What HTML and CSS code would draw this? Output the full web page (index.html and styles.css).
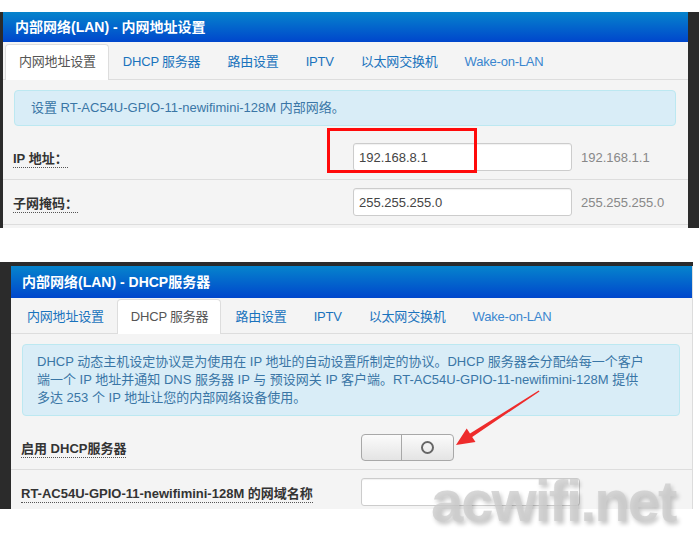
FILE: index.html
```html
<!DOCTYPE html>
<html lang="zh-CN">
<head>
  <meta charset="UTF-8" />
  <title>LAN</title>
  <link rel="stylesheet" href="styles.css">
</head>
<body>
  <div class="shot shot-lan">
    <div class="panel">
      <div class="panel-head">内部网络(LAN) - 内网地址设置</div>
      <ul class="tabs">
        <li class="active">内网地址设置</li>
        <li>DHCP 服务器</li>
        <li>路由设置</li>
        <li>IPTV</li>
        <li>以太网交换机</li>
        <li>Wake-on-LAN</li>
      </ul>
      <div class="panel-body">
        <div class="alert">设置 RT-AC54U-GPIO-11-newifimini-128M 内部网络。</div>
      </div>
      <table class="form-table">
        <tr>
          <th><span class="lbl">IP 地址：</span></th>
          <td><input class="field" type="text" value="192.168.8.1"><span class="hint">192.168.1.1</span></td>
        </tr>
        <tr>
          <th><span class="lbl">子网掩码：</span></th>
          <td><input class="field" type="text" value="255.255.255.0"><span class="hint">255.255.255.0</span></td>
        </tr>
        <tr>
          <th></th>
          <td></td>
        </tr>
      </table>
    </div>
  </div>

  <div class="shot shot-dhcp">
    <div class="panel">
      <div class="panel-head">内部网络(LAN) - DHCP服务器</div>
      <ul class="tabs">
        <li>内网地址设置</li>
        <li class="active">DHCP 服务器</li>
        <li>路由设置</li>
        <li>IPTV</li>
        <li>以太网交换机</li>
        <li>Wake-on-LAN</li>
      </ul>
      <div class="panel-body">
        <div class="alert">DHCP 动态主机设定协议是为使用在 IP 地址的自动设置所制定的协议。DHCP 服务器会分配给每一个客户<br>端一个 IP 地址并通知 DNS 服务器 IP 与 预设网关 IP 客户端。RT-AC54U-GPIO-11-newifimini-128M 提供<br>多达 253 个 IP 地址让您的内部网络设备使用。</div>
      </div>
      <table class="form-table">
        <tr>
          <th><span class="lbl">启用 DHCP服务器</span></th>
          <td>
            <div class="switch"><span class="sw-on"></span><span class="sw-off"><i class="ring"></i></span></div>
          </td>
        </tr>
        <tr>
          <th><span class="lbl">RT-AC54U-GPIO-11-newifimini-128M 的网域名称</span></th>
          <td><input class="field" type="text" value=""></td>
        </tr>
      </table>
    </div>
  </div>

  <div class="mark-box"></div>
  <svg class="mark-arrow" width="699" height="543" viewBox="0 0 699 543">
    <polygon points="538.7,390.4 470,433.5 466.7,428.5 456,445 475.5,441.9 472.2,436.9 539.5,391.4" fill="#ee2b2b"/>
  </svg>
  <div class="watermark">acwifi.net</div>
</body>
</html>
```

FILE: styles.css
```css
body {
  margin: 0;
  padding: 0;
  width: 699px;
  height: 543px;
  overflow: hidden;
  position: relative;
  background-color: #fff;
  font-family: "Liberation Sans", "Noto Sans CJK SC", sans-serif;
  font-size: 13px;
  color: #333;
}

.shot {
  background-color: #2b2b2b;
  box-sizing: border-box;
  overflow: hidden;
}

.shot-lan {
  margin-top: 12px;
  height: 216px;
  padding: 0 11px 0 3px;
}

.shot-dhcp {
  margin-top: 34px;
  width: 693px;
  height: 247px;
  padding: 4px 0 0 11px;
}

.panel {
  background-color: #f4f4f4;
  height: 100%;
  overflow: hidden;
}

.shot-dhcp .panel {
  border-right: 1px solid #dcdcdc;
}

.panel-head {
  height: 30px;
  line-height: 30px;
  padding-left: 12px;
  background: linear-gradient(#0684cc, #0046cc);
  color: #fff;
  font-weight: bold;
  font-size: 14px;
}

.shot-dhcp .panel-head {
  height: 32px;
  line-height: 32px;
  padding-left: 11px;
}

.tabs {
  list-style: none;
  margin: 0;
  padding: 2px 0 0 2px;
  display: flex;
  height: 35px;
  border-bottom: 1px solid #dddddd;
}

.shot-dhcp .tabs {
  height: 34px;
  padding-top: 1px;
}

.tabs li {
  padding: 0 12px 0 13px;
  line-height: 33px;
  color: #1a73bd;
  border: 1px solid transparent;
  border-bottom: none;
  border-radius: 4px 4px 0 0;
  letter-spacing: -0.2px;
}

.tabs li:last-child {
  color: #3a86cf;
}

.tabs li.active {
  background-color: #fff;
  border-color: #dddddd;
  color: #555;
  height: 35px;
}

.shot-dhcp .tabs li.active {
  height: 34px;
}

.panel-body {
  padding: 10px 12px 9px 11px;
}

.alert {
  background-color: #d9edf7;
  border: 1px solid #bce8f1;
  border-radius: 4px;
  padding: 8px 14px 8px 16px;
  line-height: 18px;
  color: #3a76a6;
}

.shot-dhcp .alert {
  padding-left: 14px;
}

.form-table {
  width: 100%;
  border-collapse: collapse;
}

.form-table tr {
  border-bottom: 1px solid #dddddd;
}

.form-table th {
  width: 340px;
  padding: 8px 0 8px 10px;
  text-align: left;
  font-weight: bold;
  height: 28px;
}

.form-table td {
  padding: 8px 0;
  height: 28px;
  white-space: nowrap;
}

.lbl {
  border-bottom: 1px dotted #555;
  padding-bottom: 1px;
  color: #333;
}

.field {
  width: 219px;
  height: 28px;
  box-sizing: border-box;
  padding: 0 5px;
  border: 1px solid #cccccc;
  border-radius: 3px;
  background-color: #fff;
  box-shadow: inset 0 1px 1px rgba(0, 0, 0, 0.06);
  font-family: "Liberation Sans", sans-serif;
  font-size: 13px;
  color: #444;
  vertical-align: middle;
}

.hint {
  margin-left: 9px;
  color: #888;
  vertical-align: middle;
}

.switch {
  display: flex;
  width: 93px;
  height: 27px;
  box-sizing: border-box;
  border: 1px solid #a8a8a8;
  border-radius: 4px;
  overflow: hidden;
  background: linear-gradient(#fbfbfb, #e4e4e4);
}

.sw-on {
  width: 39px;
  border-right: 1px solid #a8a8a8;
}

.sw-off {
  flex: 1;
  display: flex;
  align-items: center;
  justify-content: center;
}

.ring {
  width: 9px;
  height: 9px;
  border: 2px solid #666;
  border-radius: 50%;
}

.mark-box {
  position: absolute;
  left: 327px;
  top: 128px;
  width: 150px;
  height: 45px;
  box-sizing: border-box;
  border: 3px solid #ff0a0a;
}

.mark-arrow {
  position: absolute;
  left: 0;
  top: 0;
}

.watermark {
  position: absolute;
  left: 431px;
  top: 472px;
  font-family: "Liberation Sans", sans-serif;
  font-weight: bold;
  font-size: 58px;
  line-height: 58px;
  letter-spacing: -2px;
  color: rgba(205, 205, 205, 0.8);
  text-shadow: 2px 3px 4px rgba(0, 0, 0, 0.22);
}
```
